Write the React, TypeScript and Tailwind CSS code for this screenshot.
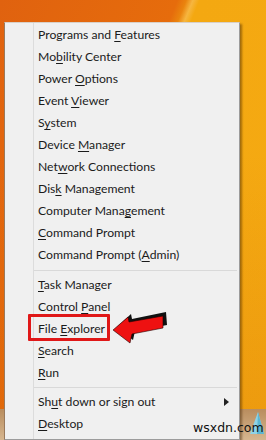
import React from "react";

type Item = { pre: string; key: string; post: string; sub?: boolean };

const group1: Item[] = [
  { pre: "Programs and ", key: "F", post: "eatures" },
  { pre: "Mo", key: "b", post: "ility Center" },
  { pre: "Power ", key: "O", post: "ptions" },
  { pre: "Event ", key: "V", post: "iewer" },
  { pre: "S", key: "y", post: "stem" },
  { pre: "Device ", key: "M", post: "anager" },
  { pre: "Net", key: "w", post: "ork Connections" },
  { pre: "Dis", key: "k", post: " Management" },
  { pre: "Computer Mana", key: "g", post: "ement" },
  { pre: "", key: "C", post: "ommand Prompt" },
  { pre: "Command Prompt (", key: "A", post: "dmin)" },
];
const group2: Item[] = [
  { pre: "", key: "T", post: "ask Manager" },
  { pre: "Control ", key: "P", post: "anel" },
  { pre: "File ", key: "E", post: "xplorer" },
  { pre: "", key: "S", post: "earch" },
  { pre: "", key: "R", post: "un" },
];
const group3: Item[] = [
  { pre: "Sh", key: "u", post: "t down or sign out", sub: true },
  { pre: "", key: "D", post: "esktop" },
];

function Row({ item }: { item: Item }) {
  return (
    <div className="h-[22px] flex items-center justify-between pl-[4px] pr-[10px] text-[#1b1b1b] whitespace-nowrap">
      <span>
        {item.pre}
        <span className="underline decoration-1 underline-offset-[2px]">{item.key}</span>
        {item.post}
      </span>
      {item.sub && (
        <svg width="5" height="8" viewBox="0 0 5 8">
          <polygon points="0,0 5,4 0,8" fill="#222" />
        </svg>
      )}
    </div>
  );
}

function Sep({ h }: { h: string }) {
  return (
    <div className={`${h} flex items-center pr-[2px]`}>
      <div className="h-px w-full bg-[#d9d9d9]" />
    </div>
  );
}

export default function App() {
  return (
    <div
      className="relative w-[266px] h-[440px] overflow-hidden bg-[linear-gradient(to_bottom,transparent_409px,#b98d5e_409px,#d6b68f_440px),linear-gradient(to_bottom,rgba(205,95,0,0)_35%,rgba(205,95,0,0.22)_100%),linear-gradient(112deg,#e0620f_0%,#e66c0c_40%,#ea840e_42%,#f6b640_43.5%,#f4a811_45%,#f5aa12_100%)] pt-[22px] pl-[4px]"
      style={{ fontFamily: 'Lato, "Open Sans", sans-serif' }}
    >
      <div className="flex w-[236px] h-[418px] bg-[#f0f0f0] border-l border-l-[#9a7a5c] border-t border-t-[#d8d0c8] border-r border-r-[#9c9c9c] border-b border-b-[#9c9c9c] shadow-[2px_2px_2px_rgba(60,30,0,0.45)] text-[12.2px] leading-none">
        <div className="w-[28px] shrink-0" />
        <div className="flex-1 border-l border-l-[#dcdcdc] pt-[1px]">
          {group1.map((it, i) => (
            <Row key={i} item={it} />
          ))}
          <Sep h="h-[8px]" />
          {group2.map((it, i) => (
            <Row key={i} item={it} />
          ))}
          <Sep h="h-[7px]" />
          {group3.map((it, i) => (
            <Row key={i} item={it} />
          ))}
        </div>
      </div>

      {/* annotation: red box */}
      <div className="absolute left-[28px] top-[314px] w-[82px] h-[27px] border-[3px] border-[#e01818] rounded-[1px]" />

      {/* annotation: arrow */}
      <svg className="absolute left-[108px] top-[309px]" width="64" height="40" viewBox="0 0 64 40">
        <polygon points="9,18 23,5 24,10 58,3 59,16 27,22 25,31" fill="#111" />
        <polygon
          points="5,21 20,8 21,13 55,7 55,19 24,25 22,34"
          fill="#ee1111"
          stroke="#220000"
          strokeWidth="0.6"
        />
      </svg>

      {/* desktop icon fragment */}
      <svg className="absolute left-[248px] top-[410px]" width="18" height="26" viewBox="0 0 18 26">
        <polygon points="10,2 2,24 16,24" fill="#8fd3e6" />
        <polygon points="10,2 9,24 16,24" fill="#5bb6d2" />
      </svg>

      {/* watermark */}
      <div
        className="absolute left-[193px] top-[422px] text-[12.5px] leading-none text-[#111]"
        style={{ fontFamily: '"DejaVu Sans", sans-serif' }}
      >
        wsxdn.com
      </div>
    </div>
  );
}
